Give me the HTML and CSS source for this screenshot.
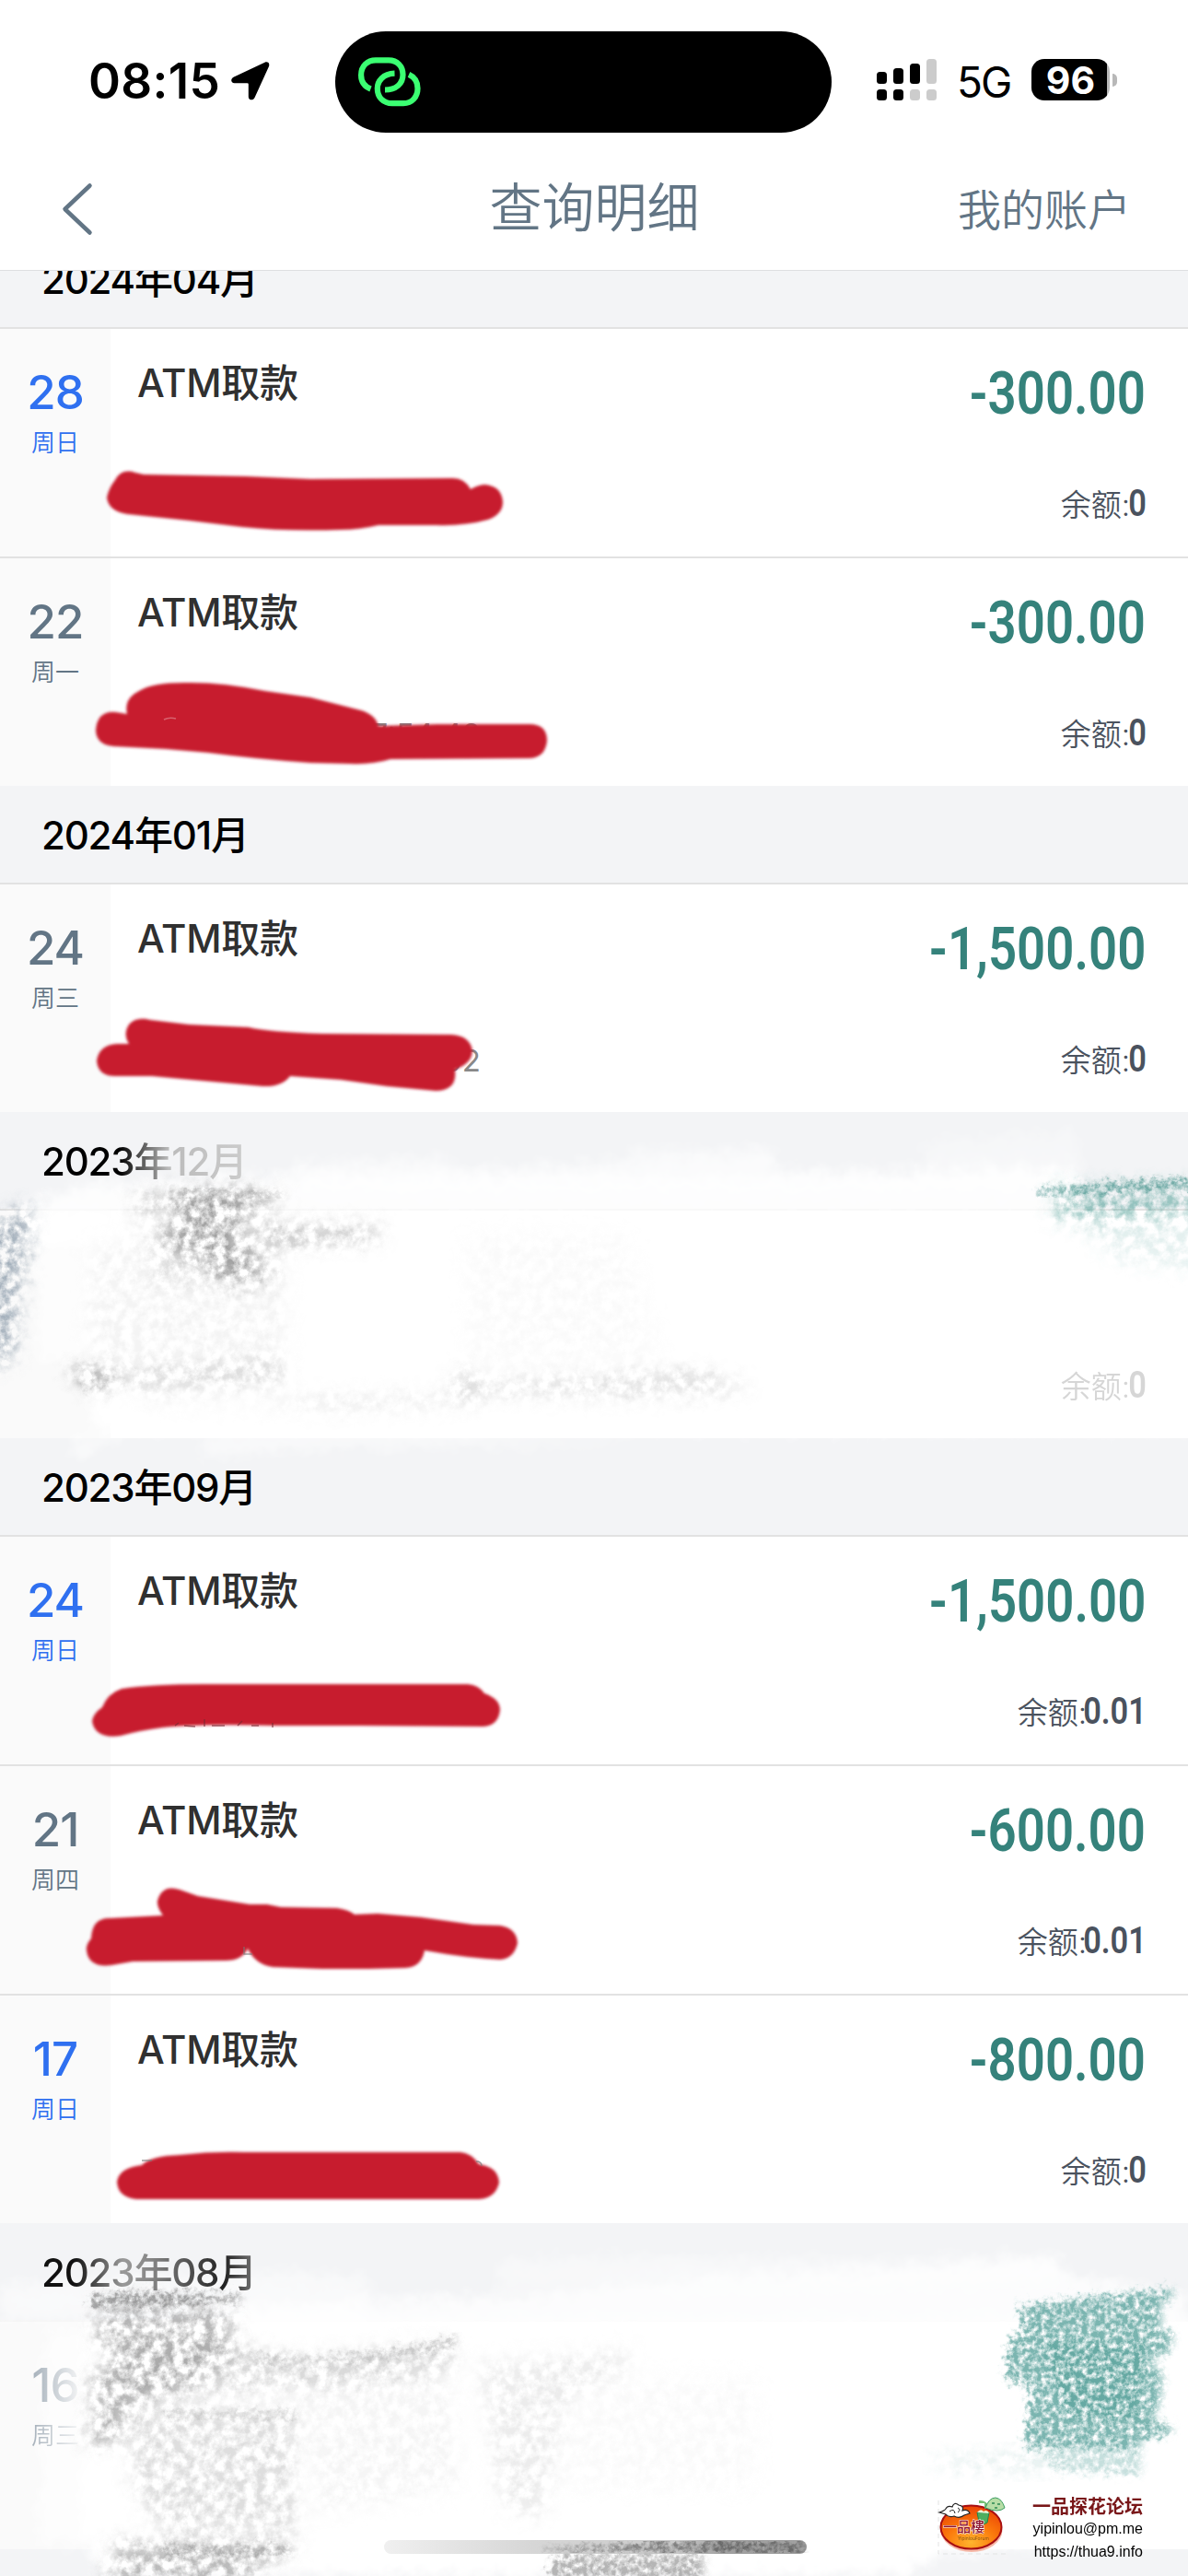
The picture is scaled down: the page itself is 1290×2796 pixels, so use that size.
FILE: index.html
```html
<!DOCTYPE html>
<html lang="zh-CN">
<head>
  <meta charset="UTF-8" />
  <meta name="viewport" content="width=device-width, initial-scale=1.0" />
  <title>查询明细</title>
  <link rel="stylesheet" href="styles.css">
</head>

<body>
  <div class="page">
    <header class="header">
      <div class="status-bar">
        <div class="status-left">
          <span class="time">08:15</span>
          <svg class="location" width="42" height="42" viewBox="0 0 42 42">
            <path d="M3 16.5 L36.5 .7 C40 -.6 42.400 2 40.800 5.500 L25.500 39 C24 42.500 18.800 42 18.800 38 V24.500 Q18.800 23.200 17.500 23.200 H3.600 C-.6 23.200 -1 18.300 3 16.500Z" />
          </svg>
        </div>
        <div class="island">
          <svg width="68" height="54" viewBox="0 0 68 54" fill="none" stroke="#3bff72" stroke-width="6.200">
            <path d="M13.500 34.500 C6 31.500 3.100 25.500 3.100 19.500 C3.100 9.500 10 3.300 19 3.300 H33 C42.500 3.300 48.500 10 48.500 19 C48.500 29 41 35.500 29 35.500" />
            <path d="M39.500 17.700 C27 18 20.800 26 20.800 34 C20.800 43.500 27 50.200 37 50.200 H49 C58.500 50.200 64.500 43 64.500 34 C64.500 27 61 21.500 55 18.800" />
          </svg>
        </div>
        <div class="status-right">
          <svg width="66" height="46" viewBox="0 0 66 46">
            <rect x="0" y="14" width="11" height="13" rx="3.500" />
            <rect x="18" y="10" width="11" height="17" rx="3.500" />
            <rect x="36" y="5" width="11" height="22" rx="3.500" />
            <rect class="off" x="54" y="0" width="11" height="27" rx="3.500" />
            <rect x="0" y="33" width="11" height="12" rx="3.500" />
            <rect x="18" y="33" width="11" height="12" rx="3.500" />
            <rect class="off" x="36" y="33" width="11" height="12" rx="3.500" />
            <rect class="off" x="54" y="33" width="11" height="12" rx="3.500" />
          </svg>
          <span class="network">5G</span>
          <span class="battery">96</span>
          <span class="battery-tip"></span>
        </div>
      </div>
      <nav class="nav">
        <svg class="back" width="34" height="58" viewBox="0 0 34 58" fill="none" stroke="#627585" stroke-width="4.500" stroke-linecap="round" stroke-linejoin="round">
          <path d="M30.500 3.500 L3.500 29 L30.500 54.500" />
        </svg>
        <h1 class="nav-title">查询明细</h1>
        <span class="nav-link">我的账户</span>
      </nav>
    </header>

    <main class="list">
      <div class="month month-first">2024年04月</div>
      <div class="row">
        <div class="date weekend"><span class="day">28</span><span class="week">周日</span></div>
        <div class="info"><span class="name">ATM取款</span></div>
        <div class="money"><span class="amount">-300.00</span><span class="balance">余额:<b>0</b></span></div>
      </div>
      <div class="row">
        <div class="date"><span class="day">22</span><span class="week">周一</span></div>
        <div class="info"><span class="name">ATM取款</span><span class="detail">7:54:42</span></div>
        <div class="money"><span class="amount">-300.00</span><span class="balance">余额:<b>0</b></span></div>
      </div>

      <div class="month">2024年01月</div>
      <div class="row">
        <div class="date"><span class="day">24</span><span class="week">周三</span></div>
        <div class="info"><span class="name">ATM取款</span><span class="detail">02</span></div>
        <div class="money"><span class="amount">-1,500.00</span><span class="balance">余额:<b>0</b></span></div>
      </div>

      <div class="month"><span class="fade-december">2023年12月</span></div>
      <div class="row wiped">
        <div class="date"></div>
        <div class="info"></div>
        <div class="money"><span class="amount"></span><span class="balance">余额:<b>0</b></span></div>
      </div>

      <div class="month">2023年09月</div>
      <div class="row">
        <div class="date weekend"><span class="day">24</span><span class="week">周日</span></div>
        <div class="info"><span class="name">ATM取款</span></div>
        <div class="money"><span class="amount">-1,500.00</span><span class="balance cents">余额:<b>0.01</b></span></div>
      </div>
      <div class="row">
        <div class="date"><span class="day">21</span><span class="week">周四</span></div>
        <div class="info"><span class="name">ATM取款</span></div>
        <div class="money"><span class="amount">-600.00</span><span class="balance cents">余额:<b>0.01</b></span></div>
      </div>
      <div class="row">
        <div class="date weekend"><span class="day">17</span><span class="week">周日</span></div>
        <div class="info"><span class="name">ATM取款</span></div>
        <div class="money"><span class="amount">-800.00</span><span class="balance">余额:<b>0</b></span></div>
      </div>

      <div class="month"><span class="fade-august">2023年08月</span></div>
      <div class="row wiped last">
        <div class="date"><span class="day">16</span><span class="week">周三</span></div>
        <div class="info"></div>
      </div>
    </main>

    <!-- marker strokes and eraser smudges drawn over the list -->
    <svg class="marks" width="1290" height="2796" viewBox="0 0 1290 2796">
      <defs>
        <filter id="soft" x="-5%" y="-20%" width="110%" height="140%">
          <feGaussianBlur stdDeviation="1.800" />
        </filter>
        <filter id="chalk" x="-10%" y="-20%" width="120%" height="140%">
          <feTurbulence type="fractalNoise" baseFrequency="0.16" numOctaves="4" seed="4" result="noise" />
          <feColorMatrix in="noise" values="0 0 0 0 0  0 0 0 0 0  0 0 0 0 0  2.400 0 0 0 -0.500" result="grain" />
          <feGaussianBlur in="SourceGraphic" stdDeviation="3" result="shape" />
          <feDisplacementMap in="shape" in2="noise" scale="20" xChannelSelector="R" yChannelSelector="G" result="rough" />
          <feComposite in="rough" in2="grain" operator="in" />
        </filter>
        <filter id="dust" x="-20%" y="-40%" width="140%" height="180%">
          <feTurbulence type="fractalNoise" baseFrequency="0.09" numOctaves="5" seed="9" result="noise" />
          <feColorMatrix in="noise" values="0 0 0 0 0  0 0 0 0 0  0 0 0 0 0  2.800 0 0 0 -0.950" result="grain" />
          <feGaussianBlur in="SourceGraphic" stdDeviation="10" result="shape" />
          <feDisplacementMap in="shape" in2="noise" scale="16" xChannelSelector="G" yChannelSelector="B" result="rough" />
          <feComposite in="rough" in2="grain" operator="in" />
        </filter>
        <filter id="wash" x="-5%" y="-20%" width="110%" height="140%">
          <feTurbulence type="fractalNoise" baseFrequency="0.06" numOctaves="3" seed="2" result="noise" />
          <feGaussianBlur in="SourceGraphic" stdDeviation="7" result="shape" />
          <feDisplacementMap in="shape" in2="noise" scale="20" xChannelSelector="R" yChannelSelector="G" />
        </filter>
        <linearGradient id="bar">
          <stop offset="0" stop-color="#ececec" />
          <stop offset=".35" stop-color="#ccc" />
          <stop offset=".7" stop-color="#bbb" />
          <stop offset=".8" stop-color="#888" />
          <stop offset="1" stop-color="#888" />
        </linearGradient>
      </defs>

      <!-- white wash, december -->
      <g filter="url(#wash)" fill="#fff">
        <path opacity=".8" d="M20 1312 L90 1285 L320 1274 L620 1276 L900 1276 L1170 1270 L1172 1315 L1290 1330 L1290 1350 L20 1350Z" />
        <path opacity=".5" d="M320 1262 L490 1255 L495 1270 L690 1258 L840 1250 L845 1270 L1000 1268 L1170 1264 V1290 H320Z" />
        <path opacity=".3" d="M680 1245 H840 V1270 H680Z M1000 1238 L1170 1228 L1172 1280 L1005 1280Z" />
        <path opacity=".6" d="M35 1320 H110 V1470 L40 1480Z" />
        <path d="M100 1330 H1290 V1552 H105 L90 1500Z" />
        <path opacity=".55" d="M75 1560 L140 1560 L80 1582Z M230 1560 L470 1558 L710 1568 L400 1570 L210 1580Z" />
      </g>
      <!-- colour smears, december -->
      <g filter="url(#dust)">
        <path fill="#8494a4" opacity=".75" d="M-20 1330 L35 1308 L28 1370 L20 1400 L14 1475 L-20 1485Z" />
        <path fill="#b5b5b5" opacity=".15" d="M140 1310 H310 V1510 H150Z M100 1350 H150 V1500 H95Z" />
        <path fill="#777" opacity=".65" d="M180 1292 L290 1296 L250 1330 L265 1350 L290 1385 L250 1395 L220 1370 L165 1345 L200 1320Z" />
        <path fill="#777" opacity=".5" d="M145 1298 L310 1296 L290 1312 L150 1312Z M250 1332 L415 1332 L405 1346 L300 1352Z" />
        <path fill="#999" opacity=".25" d="M165 1360 H300 V1392 H165Z" />
        <path fill="#666" opacity=".8" d="M75 1485 L125 1492 L140 1496 L95 1507Z" />
        <path fill="#888" opacity=".4" d="M120 1492 L300 1480 L310 1494 L150 1502Z" />
        <path fill="#888" opacity=".3" d="M490 1490 L520 1486 L525 1500 L760 1488 L820 1508 L680 1514 L520 1512 L500 1523Z" />
        <path fill="#bbb" opacity=".07" d="M505 1340 H680 L720 1480 H510Z" />
        <path fill="#999" opacity=".35" d="M150 1512 L270 1522 L520 1514 V1520 L370 1528 L160 1518Z" />
        <path fill="#459790" opacity=".6" d="M1145 1290 H1310 V1312 L1240 1320 L1145 1322Z" />
        <path fill="#5aa39c" opacity=".16" d="M1160 1315 H1310 V1380 L1210 1365Z" />
      </g>
      <path filter="url(#chalk)" fill="#408f88" opacity=".8" d="M1125 1292 L1170 1287 L1300 1278 V1288 L1180 1294 L1130 1296Z" />
      <path filter="url(#chalk)" fill="#777" opacity=".5" d="M186 1292 L210 1291 L308 1296 L306 1299 L200 1297Z" />

      <!-- white wash, august -->
      <g filter="url(#wash)" fill="#fff">
        <path opacity=".5" d="M0 2478 L300 2466 L400 2472 L400 2520 L0 2520Z" />
        <path opacity=".75" d="M230 2504 L590 2490 L760 2472 L980 2462 L1150 2452 L1160 2470 L1290 2490 V2530 H160Z" />
        <path opacity=".4" d="M540 2454 L710 2448 L980 2452 L1150 2444 L1150 2470 L760 2480 L540 2485Z" />
        <path opacity=".6" d="M50 2530 H130 V2760 H40Z" />
        <path d="M90 2525 H1290 V2750 L1030 2770 L980 2796 H110 L90 2740Z" />
      </g>
      <!-- colour smears, august -->
      <g filter="url(#dust)">
        <path fill="#777" opacity=".55" d="M112 2500 L250 2506 L254 2555 L200 2590 L145 2610 L130 2650 L95 2655 L105 2610 L95 2590 L120 2560 L102 2530Z" />
        <path fill="#999" opacity=".38" d="M130 2550 L240 2545 L330 2560 L490 2545 L495 2570 L400 2585 L150 2605Z" />
        <path fill="#999" opacity=".32" d="M140 2615 L325 2615 L318 2690 L325 2745 L180 2750 L145 2700Z" />
        <path fill="#aaa" opacity=".12" d="M325 2575 L490 2570 L500 2700 L345 2730Z" />
        <path fill="#aaa" opacity=".22" d="M520 2565 L690 2552 L675 2575 L610 2600 L590 2735 L545 2720Z" />
        <path fill="#bbb" opacity=".07" d="M600 2580 H820 V2700 H600Z" />
        <path fill="#777" opacity=".5" d="M120 2760 L320 2758 L315 2772 L280 2782 L275 2810 H110 L125 2780Z" />
      </g>
      <g filter="url(#chalk)">
        <path fill="#666" opacity=".6" d="M98 2493 L140 2487 L264 2491 L262 2497 L180 2503 L100 2504Z" />
        <path fill="#888" opacity=".4" d="M255 2555 L330 2560 L400 2555 L497 2537 L496 2548 L400 2563 L300 2566Z" />
        <path fill="#888" opacity=".4" d="M180 2618 H325 V2623 L180 2624Z" />
        <path fill="#777" opacity=".5" d="M175 2764 H320 L315 2771 L180 2774Z" />
        <path fill="#777" opacity=".55" d="M605 2772 H765 V2800 H592Z" />
      </g>
      <g filter="url(#chalk)" fill="#43958e">
        <path opacity=".7" d="M1106 2503 L1150 2497 L1276 2484 L1272 2496 L1262 2500 L1262 2530 L1275 2531 L1272 2550 L1252 2562 L1264 2580 L1260 2610 L1252 2625 L1275 2635 L1270 2643 L1240 2647 V2658 L1115 2658 L1114 2645 L1120 2590 L1093 2583 L1096 2540 L1110 2530 L1110 2510Z" />
        <path opacity=".4" d="M1135 2540 L1245 2545 L1240 2625 L1160 2620Z" />
        <path opacity=".3" d="M1130 2662 L1240 2658 L1240 2686 L1150 2682Z" />
      </g>
      <path filter="url(#dust)" fill="#3a8d86" opacity=".15" d="M1010 2668 L1140 2660 V2684 L1020 2678Z" />
      <g class="home">
        <rect x="417" y="2757" width="459" height="15" rx="7.500" fill="url(#bar)" opacity=".8" />
        <path filter="url(#chalk)" fill="#333" opacity=".6" d="M590 2767 L700 2761 L780 2760 H873 V2769 H600Z" />
      </g>

      <!-- marker -->
      <g filter="url(#soft)" fill="#c71e2f">
        <path d="M116 540 Q118 530 125 521 Q132 508 147 513 L156 515 L267 517 L337 520 L490 519 Q504 518 511 531 Q520 526 527 526 Q545 528 546 545 Q546 558 530 564 Q505 571 473 570 H411 Q390 575 370 575 Q310 577 263 572 L205 565 L138 558 Q118 555 116 540Z" />
        <path d="M104 792 Q106 771 126 773 L138 775 Q134 758 151 750 Q165 741 200 741 Q240 740 288 750 L337 757 L392 771 Q408 776 411 788 L475 786 L575 786 Q594 786 594 804 Q592 823 574 823 L424 824 Q405 830 380 829 L337 828 Q280 824 226 817 L180 813 L123 810 Q104 808 104 792Z" />
        <path d="M105 1151 Q108 1134 127 1133 H140 Q133 1122 140 1112 Q148 1103 163 1107 L205 1112 L270 1115 Q290 1120 350 1122 L490 1123 Q510 1124 513 1140 Q513 1154 494 1161 Q497 1184 473 1184 L420 1179 L370 1172 L315 1168 Q306 1180 285 1179 L197 1171 L165 1168 H125 Q106 1168 105 1151Z" />
        <path d="M100 1868 Q101 1860 111 1853 Q117 1838 132 1833 Q165 1828 222 1828 H508 Q520 1829 526 1838 Q543 1844 543 1856 Q541 1873 525 1874 L390 1873 H296 Q220 1871 177 1875 Q153 1878 131 1884 Q103 1888 100 1868Z" />
        <path d="M94 2117 Q93 2111 99 2104 Q100 2081 120 2082 L177 2079 Q170 2070 171 2063 Q176 2045 195 2051 L215 2058 L271 2067 H290 L305 2070 L366 2071 Q379 2073 385 2078 L410 2077 L457 2081 L514 2089 L543 2090 Q561 2093 562 2109 Q558 2126 543 2127 Q505 2125 461 2117 Q458 2135 440 2136 L400 2137 L350 2137 L296 2135 Q277 2132 269 2115 Q263 2128 245 2128 L144 2129 L121 2133 Q96 2136 94 2117Z" />
        <path d="M127 2368 Q129 2353 154 2350 Q164 2340 195 2339 Q230 2335 265 2336 H500 Q512 2337 520 2349 Q541 2352 542 2369 Q538 2386 520 2387 H148 Q128 2385 127 2368Z" />
      </g>
      <g fill="none" stroke="#7a2932" stroke-width="1.500" opacity=".7">
        <path d="M190 1873 L194 1870 M200 1873 L212 1874 M222 1866 V1874 M230 1873 H244 M258 1873 L263 1868 M273 1873 H281 M296 1870 V1875" />
        <path stroke="#777" d="M265 2113 V2121 H274 M154 2345 H165 M517 2346 Q523 2346 523 2351" />
        <path stroke="#e0808a" d="M178 781 Q184 778 191 780" />
      </g>
    </svg>

    <div class="watermark">
      <svg width="76" height="64" viewBox="0 0 76 64">
        <defs>
          <radialGradient id="sun" cx=".5" cy=".85" r=".9">
            <stop offset="0" stop-color="#ffb52e" />
            <stop offset=".45" stop-color="#fb7a0c" />
            <stop offset="1" stop-color="#e83c05" />
          </radialGradient>
        </defs>
        <path d="M1 4 V62 H75" fill="none" stroke="#e3e3e3" stroke-dasharray="5 4" />
        <ellipse cx="37" cy="36" rx="33.500" ry="24" fill="#f6b9a8" />
        <ellipse cx="36.500" cy="33" rx="33" ry="23.500" fill="url(#sun)" stroke="#a80f12" stroke-width="2" />
        <path d="M2 17 Q8 15 9 13 Q11 9 16 11 Q18 5 23 9 Q29 10 27 15 Q33 13 35 18 L29 20 Q24 24 18 21 Q12 23 9 19Z" fill="#fff" stroke="#222" stroke-width="1.200" />
        <path d="M13 16 Q18 12 19 18 M22 12 Q26 14 22 17" fill="none" stroke="#222" />
        <path d="M43 17 H56 L54 28 Q49 32 45 27Z" fill="#4dae5f" stroke="#25834a" />
        <path d="M43 17 Q47 12 50 16 Q54 13 56 18Z" fill="#e9f5d9" />
        <path d="M45 4 Q53 3 57 12 Q54 11 51 13 V7 L45 7Z" fill="#76bf75" />
        <path d="M52 12 Q56 1 63 1 Q70 2 73 12 Q66 18 52 12Z" fill="#b7dda6" stroke="#3b9c61" />
        <path d="M59 7 H62 M65 8 H68 M62 12 H65" stroke="#2b8751" stroke-width="1.500" />
        <text class="logo-name" x="6" y="38">一品樓</text>
        <text class="logo-sub" x="22" y="47">YipinlouForum</text>
      </svg>
      <div class="watermark-text">
        <strong>一品探花论坛</strong>
        <span>yipinlou@pm.me</span>
        <span>https://thua9.info</span>
      </div>
    </div>
  </div>
</body>
</html>
```
FILE: styles.css
```css
* {
  box-sizing: border-box;
}

body {
  margin: 0;
  background: #fff;
  font-family: Inter, "Noto Sans CJK SC", sans-serif;
}

.page {
  position: relative;
  width: 1290px;
  height: 2796px;
  overflow: hidden;
}

/* header */
.header {
  height: 294px;
  background: #fff;
  border-bottom: 1px solid #dedfe1;
}

.status-bar {
  display: grid;
  grid-template-columns: 364px 539px 1fr;
  height: 144px;
  padding-top: 34px;
}

.status-left {
  display: flex;
  align-items: center;
  height: 110px;
  padding-left: 96px;
}

.time {
  width: 155px;
  font-size: 53px;
  font-weight: 600;
  line-height: 60px;
  letter-spacing: 0.3px;
  white-space: nowrap;
  margin-bottom: 2px;
}

.location {
  margin-bottom: 2px;
}

.island {
  height: 110px;
  border-radius: 55px;
  background: #000;
  padding: 28px 25px;
}

.status-right {
  display: flex;
  align-items: center;
  height: 105px;
  padding-left: 49px;
}

.off {
  fill: #ccc;
}

.network {
  width: 79px;
  margin-left: 21px;
  font-size: 46px;
  line-height: 50px;
  letter-spacing: -2px;
  padding-top: 5px;
}

.battery {
  width: 85px;
  height: 45px;
  border-radius: 14px;
  background: linear-gradient(to right, #000 82px, #b8b8b8 82px);
  color: #fff;
  font-size: 41px;
  font-weight: 700;
  line-height: 46px;
  text-align: center;
  margin-left: 2px;
}

.battery-tip {
  width: 5px;
  height: 14px;
  margin-left: 3px;
  border-radius: 0 5px 5px 0;
  background: #b8b8b8;
}

.nav {
  display: grid;
  grid-template-columns: 1fr 260px 1fr;
  align-items: center;
  height: 149px;
  padding: 10px 62px 0 67px;
  color: #627585;
}

.back {
  margin-top: 6px;
}

.nav-title {
  margin: 5px 0 0 -4px;
  font-size: 57px;
  font-weight: 350;
  line-height: 70px;
  text-align: center;
}

.nav-link {
  font-size: 47px;
  font-weight: 350;
  line-height: 60px;
  text-align: right;
  margin-top: 8px;
}

/* list */
.list {
  height: 2502px;
  background: #f3f4f6;
}

.month {
  height: 105px;
  padding-left: 45px;
  background: #f3f4f6;
  font-size: 42px;
  font-weight: 500;
  line-height: 107px;
  letter-spacing: -1.2px;
}

.month-first {
  height: 61px;
  line-height: 19px;
  overflow: hidden;
}

.row {
  display: flex;
  height: 249px;
  border-top: 2px solid #e2e2e2;
  background: #fff;
}

.date {
  display: flex;
  flex-direction: column;
  align-items: center;
  width: 120px;
  padding-top: 39px;
  background: #fafafa;
  color: #627585;
}

.date.weekend {
  color: #2f70f0;
}

.day {
  font-size: 51px;
  font-weight: 550;
  line-height: 60px;
  letter-spacing: -1px;
}

.week {
  margin-top: 10px;
  font-size: 26px;
  font-weight: 350;
  line-height: 30px;
}

.info {
  display: flex;
  flex-direction: column;
  flex: 1;
  padding: 29px 0 0 29px;
}

.name {
  color: #303030;
  font-size: 42px;
  font-weight: 500;
  line-height: 60px;
  letter-spacing: -0.2px;
}

.detail {
  width: 373px;
  margin-top: 82px;
  color: #888;
  font-size: 33px;
  font-weight: 400;
  line-height: 40px;
  text-align: right;
}

.money {
  display: flex;
  flex-direction: column;
  align-items: flex-end;
  padding: 39px 46px 0 0;
}

.amount {
  height: 60px;
  color: #35827b;
  font-family: Roboto, sans-serif;
  font-size: 65px;
  font-weight: 600;
  line-height: 62px;
  transform: scaleX(0.84);
  transform-origin: right;
}

.balance {
  margin-top: 71px;
  color: #4a525e;
  font-size: 33px;
  font-weight: 350;
  line-height: 40px;
}

.balance b {
  display: inline-block;
  font-family: Roboto, sans-serif;
  font-size: 40px;
  font-weight: 600;
  line-height: 40px;
  transform: scaleX(0.86);
  transform-origin: right;
  margin: 0 -1px 0 -5px;
}

.balance.cents b {
  margin-left: -15px;
}

/* erased parts */
.wiped .balance,
.wiped .balance b {
  color: #d6d6d6;
}

.wiped .day,
.wiped .week {
  color: transparent;
  background: linear-gradient(to right, #a5b0ba, #f2f3f4);
  background-clip: text;
}

.wiped .balance,
.wiped .day,
.wiped .week,
.fade-december,
.fade-august {
  position: relative;
  z-index: 2;
}

.fade-december {
  color: transparent;
  background: linear-gradient(to right, #000 38%, #444 46%, #bbb 62%, #ccc);
  background-clip: text;
}

.fade-august {
  color: transparent;
  background: linear-gradient(to right, #111 15%, #999 38%, #888 50%, #222 85%, #777);
  background-clip: text;
}

.last {
  border-top-color: #f3f3f3;
}

.marks {
  position: absolute;
  top: 0;
  left: 0;
}

/* watermark */
.watermark {
  position: absolute;
  z-index: 3;
  right: 49px;
  bottom: 12px;
  display: flex;
  gap: 27px;
  height: 74px;
}

.watermark-text {
  display: flex;
  flex-direction: column;
  align-items: flex-end;
  font-family: "Liberation Sans", "Noto Sans CJK SC", sans-serif;
  font-size: 16px;
  line-height: 25px;
  white-space: nowrap;
}

.watermark-text strong {
  color: #791719;
  font-size: 20px;
  line-height: 22px;
}

.logo-name {
  fill: #8e1430;
  stroke: #fff;
  stroke-width: 1px;
  paint-order: stroke;
  font-family: "Noto Sans CJK TC", sans-serif;
  font-size: 15px;
  font-weight: 500;
}

.logo-sub {
  fill: #8a5514;
  font-size: 5px;
}
```
